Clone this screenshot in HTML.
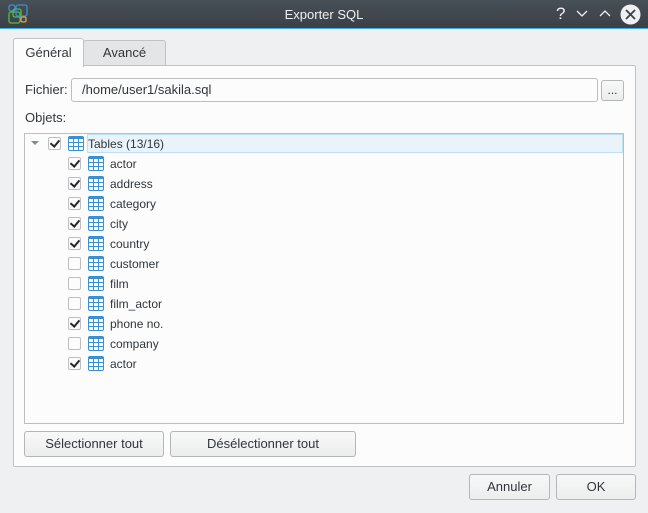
<!DOCTYPE html>
<html><head><meta charset="utf-8"><style>
*{box-sizing:border-box;margin:0;padding:0}
body{width:648px;height:513px;background:#eff0f1;font-family:"Liberation Sans","DejaVu Sans",sans-serif;font-size:12px;color:#31363b;position:relative;overflow:hidden}
.a{position:absolute}
.tb{left:0;top:0;width:648px;height:29px;background:linear-gradient(#475057,#3a4046);color:#eff0f1;border-bottom:1px solid #3daee9}
.btn{position:absolute;border:1px solid #b4b6b8;border-radius:3px;background:linear-gradient(#f8f8f8,#eceded);text-align:center;font-size:12px;color:#31363b}
.cb{position:absolute;width:13px;height:13px;border:1px solid #bcbebf;border-radius:2px;background:#fcfcfc}
.cb.c::after{content:"";position:absolute;left:3px;top:0px;width:4px;height:7px;border:solid #232629;border-width:0 2px 2px 0;transform:rotate(40deg)}
.ic{position:absolute;width:16px;height:15px;border:1px solid #3b8fd4;border-top:3px solid #3b8fd4;border-radius:2px;background:
linear-gradient(90deg,transparent 4px,#3b8fd4 4px,#3b8fd4 5px,transparent 5px,transparent 9px,#3b8fd4 9px,#3b8fd4 10px,transparent 10px),
linear-gradient(transparent 3px,#3b8fd4 3px,#3b8fd4 4px,transparent 4px,transparent 7px,#3b8fd4 7px,#3b8fd4 8px,transparent 8px);background-color:#fff}
.t{position:absolute;font-size:12px;line-height:14px}
</style></head><body>
<div class="a tb">
 <svg class="a" style="left:8px;top:4px" width="20" height="20" viewBox="0 0 20 20" fill="none" stroke-width="1.3">
  <rect x="1" y="1" width="6" height="6" rx="2" stroke="#3b8fd4"/>
  <rect x="5" y="5" width="8" height="8" rx="2" stroke="#57b947"/>
  <rect x="1" y="8" width="11" height="11" rx="2" stroke="#57b947"/>
  <rect x="8" y="1" width="11" height="11" rx="2" stroke="#3b8fd4"/>
  <rect x="13" y="13" width="5" height="5" rx="1.5" stroke="#f0a030"/>
 </svg>
 <div class="a" style="left:0;width:648px;top:7px;text-align:center;font-size:13px">Exporter SQL</div>
 <div class="a" style="left:556px;top:4px;font-size:17px">?</div>
 <svg class="a" style="left:576px;top:10px" width="12" height="8"><path d="M1 1 L6 6 L11 1" stroke="#eff0f1" fill="none" stroke-width="1.3"/></svg>
 <svg class="a" style="left:599px;top:9px" width="12" height="8"><path d="M1 7 L6 2 L11 7" stroke="#eff0f1" fill="none" stroke-width="1.3"/></svg>
 <svg class="a" style="left:620px;top:4px" width="21" height="21"><circle cx="10.5" cy="10.5" r="10" fill="#eff0f1"/><path d="M6 6 L15 15 M15 6 L6 15" stroke="#3a4046" stroke-width="1.8"/></svg>
</div>
<div class="a" style="left:83px;top:40px;width:83px;height:26px;border:1px solid #c0c2c3;border-radius:3px 3px 0 0;background:#e3e5e6;text-align:center;line-height:24px;font-size:13px">Avancé</div>
<div class="a" style="left:13px;top:65px;width:623px;height:402px;border:1px solid #c0c2c3;border-radius:0 2px 2px 2px;background:#fcfcfc"></div>
<div class="a" style="left:13px;top:38px;width:71px;height:29px;border:1px solid #c0c2c3;border-bottom:none;border-radius:3px 3px 0 0;background:#fcfcfc;text-align:center;line-height:28px;font-size:13px">Général</div>
<div class="t" style="left:25px;top:83px;font-size:13px">Fichier:</div>
<div class="a" style="left:71px;top:78px;width:527px;height:24px;border:1px solid #bcbebf;border-radius:3px;background:#fcfcfc;padding-left:10px;line-height:22px;font-size:13px">/home/user1/sakila.sql</div>
<div class="btn" style="left:601px;top:80px;width:23px;height:21px;line-height:18px">...</div>
<div class="t" style="left:25px;top:111px;font-size:13px">Objets:</div>
<div class="a" style="left:24px;top:133px;width:600px;height:291px;border:1px solid #bcbebf;background:#fcfcfc"></div>
<div class="a" style="left:87px;top:134px;width:536px;height:19px;background:#e9f3fa;border:1px solid #bfdff2"></div>
<svg class="a" style="left:31px;top:141px" width="8" height="5"><path d="M0 0 H8 L4 4Z" fill="#7f8c8d"/></svg>
<div class="cb c" style="left:48px;top:137px"></div>
<div class="ic" style="left:68px;top:136px"></div>
<div class="t" style="left:88px;top:137px">Tables (13/16)</div>
<div class="cb c" style="left:68px;top:157px"></div><div class="ic" style="left:88px;top:156px"></div><div class="t" style="left:110px;top:157px">actor</div>
<div class="cb c" style="left:68px;top:177px"></div><div class="ic" style="left:88px;top:176px"></div><div class="t" style="left:110px;top:177px">address</div>
<div class="cb c" style="left:68px;top:197px"></div><div class="ic" style="left:88px;top:196px"></div><div class="t" style="left:110px;top:197px">category</div>
<div class="cb c" style="left:68px;top:217px"></div><div class="ic" style="left:88px;top:216px"></div><div class="t" style="left:110px;top:217px">city</div>
<div class="cb c" style="left:68px;top:237px"></div><div class="ic" style="left:88px;top:236px"></div><div class="t" style="left:110px;top:237px">country</div>
<div class="cb" style="left:68px;top:257px"></div><div class="ic" style="left:88px;top:256px"></div><div class="t" style="left:110px;top:257px">customer</div>
<div class="cb" style="left:68px;top:277px"></div><div class="ic" style="left:88px;top:276px"></div><div class="t" style="left:110px;top:277px">film</div>
<div class="cb" style="left:68px;top:297px"></div><div class="ic" style="left:88px;top:296px"></div><div class="t" style="left:110px;top:297px">film_actor</div>
<div class="cb c" style="left:68px;top:317px"></div><div class="ic" style="left:88px;top:316px"></div><div class="t" style="left:110px;top:317px">phone no.</div>
<div class="cb" style="left:68px;top:337px"></div><div class="ic" style="left:88px;top:336px"></div><div class="t" style="left:110px;top:337px">company</div>
<div class="cb c" style="left:68px;top:357px"></div><div class="ic" style="left:88px;top:356px"></div><div class="t" style="left:110px;top:357px">actor</div>
<div class="btn" style="left:24px;top:431px;width:140px;height:26px;line-height:24px;font-size:13px">Sélectionner tout</div>
<div class="btn" style="left:170px;top:431px;width:186px;height:26px;line-height:24px;font-size:13px">Désélectionner tout</div>
<div class="btn" style="left:469px;top:474px;width:81px;height:26px;line-height:24px;font-size:13px">Annuler</div>
<div class="btn" style="left:556px;top:474px;width:80px;height:26px;line-height:24px;font-size:13px">OK</div>
</body></html>
